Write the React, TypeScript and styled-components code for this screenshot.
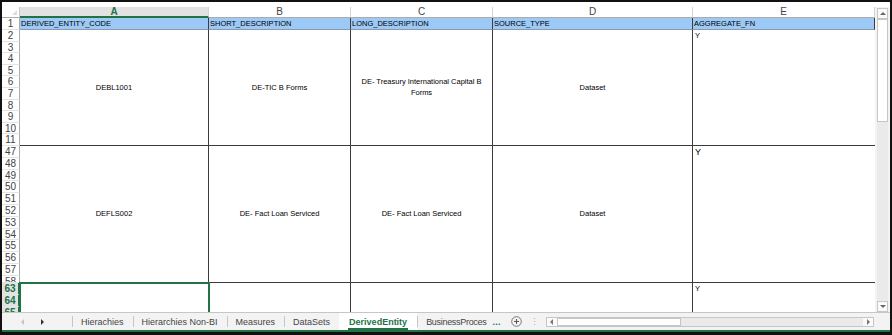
import React from 'react';
import styled, { createGlobalStyle } from 'styled-components';

const GREEN = '#217346';
const LINE = '#3c3c3c';

const GlobalStyle = createGlobalStyle`
  html, body { margin: 0; padding: 0; background: #111; }
  body { font-family: 'Liberation Sans', Arial, sans-serif; }
`;

const Frame = styled.div`
  width: 892px;
  height: 335px;
  box-sizing: border-box;
  border: 2px solid #111;
  border-bottom-width: 3px;
  background: #f3f3f3;
  display: flex;
  flex-direction: column;
  overflow: hidden;
`;

const TopStrip = styled.div`
  height: 5px;
  background: #fff;
  flex: none;
`;

const SheetArea = styled.div`
  height: 305px;
  display: flex;
  flex: none;
  background: #fff;
`;

const Grid = styled.div`
  display: grid;
  grid-template-columns: 18px 189px 142px 142px 200px 182px;
  grid-template-rows: 11px 12px repeat(10, 11.6px) repeat(11, 11.8px) 7px 12px 12px 12px;
  width: 873px;
  height: 305px;
  overflow: hidden;
  background: #fff;
`;

const Corner = styled.div`
  background: #fff;
  border-right: 1px solid #c8c8c8;
  border-bottom: 1px solid #ababab;
  box-sizing: border-box;
  position: relative;
  &::after {
    content: '';
    position: absolute;
    right: 2px;
    bottom: 2px;
    border-left: 5px solid transparent;
    border-bottom: 5px solid #dcdcdc;
  }
`;

const ColHead = styled.div<{ $active?: boolean }>`
  box-sizing: border-box;
  background: ${p => (p.$active ? '#e2e2e2' : '#fff')};
  color: ${p => (p.$active ? GREEN : '#444')};
  font-weight: ${p => (p.$active ? 700 : 400)};
  border-right: 1px solid #d4d4d4;
  border-bottom: ${p => (p.$active ? `2px solid ${GREEN}` : '1px solid #ababab')};
  font-size: 10px;
  line-height: 10px;
  text-align: center;
`;

const RowHead = styled.div<{ $active?: boolean; $row: number }>`
  grid-column: 1;
  grid-row: ${p => p.$row};
  box-sizing: border-box;
  background: ${p => (p.$active ? '#e2e2e2' : '#fff')};
  color: ${p => (p.$active ? GREEN : '#444')};
  font-weight: ${p => (p.$active ? 700 : 400)};
  border-right: ${p => (p.$active ? `2px solid ${GREEN}` : '1px solid #ababab')};
  border-bottom: 1px solid #e4e4e4;
  font-size: 10px;
  line-height: 11.8px;
  text-align: center;
  overflow: hidden;
`;

const HeaderCell = styled.div`
  grid-row: 2;
  box-sizing: border-box;
  background: #9dc9f6;
  border-right: 1px solid ${LINE};
  border-bottom: 1px solid #8a9aab;
  font-size: 7.5px;
  line-height: 11px;
  padding-left: 1px;
  color: #000;
  white-space: nowrap;
  overflow: hidden;
`;

const Cell = styled.div<{ $row: string; $col: number; $top?: boolean; $big?: boolean; $open?: boolean }>`
  grid-row: ${p => p.$row};
  grid-column: ${p => p.$col};
  box-sizing: border-box;
  border-right: ${p => (p.$open ? 'none' : `1px solid ${LINE}`)};
  border-bottom: 1px solid ${LINE};
  display: flex;
  flex-direction: column;
  align-items: ${p => (p.$top ? 'flex-start' : 'center')};
  justify-content: ${p => (p.$top ? 'flex-start' : 'center')};
  text-align: center;
  padding-left: ${p => (p.$top ? '2px' : '0')};
  font-size: ${p => (p.$big ? '9px' : '7.5px')};
  line-height: ${p => (p.$big ? '12px' : '11.6px')};
  color: #000;
  white-space: nowrap;
`;

const Selected = styled(Cell)`
  outline: 2px solid ${GREEN};
  outline-offset: -1px;
  z-index: 1;
`;

const VScrollWrap = styled.div`
  width: 15px;
  padding: 1px 2px 0 2px;
  box-sizing: border-box;
  background: #f3f3f3;
`;

const VScroll = styled.div`
  height: 100%;
  width: 11px;
  display: flex;
  flex-direction: column;
  background: #eaeaea;
`;

const ScrollBtn = styled.div`
  width: 11px;
  height: 11px;
  flex: none;
  box-sizing: border-box;
  border: 1px solid #c6c6c6;
  background: #fafafa;
  display: flex;
  align-items: center;
  justify-content: center;
`;

const VThumb = styled.div`
  height: 103px;
  flex: none;
  box-sizing: border-box;
  border: 1px solid #c6c6c6;
  background: #fff;
`;

const Spacer = styled.div`
  flex: 1;
`;

const Arrow = styled.span<{ $dir: 'up' | 'down' | 'left' | 'right'; $color?: string }>`
  width: 0;
  height: 0;
  ${p => {
    const c = p.$color || '#666';
    switch (p.$dir) {
      case 'up': return `border-left: 3px solid transparent; border-right: 3px solid transparent; border-bottom: 3px solid ${c};`;
      case 'down': return `border-left: 3px solid transparent; border-right: 3px solid transparent; border-top: 3px solid ${c};`;
      case 'left': return `border-top: 3px solid transparent; border-bottom: 3px solid transparent; border-right: 3px solid ${c};`;
      default: return `border-top: 3px solid transparent; border-bottom: 3px solid transparent; border-left: 3px solid ${c};`;
    }
  }}
`;

const TabBar = styled.div`
  height: 18px;
  flex: none;
  box-sizing: border-box;
  border-top: 1px solid #c6c6c6;
  background: #f3f3f3;
  display: flex;
  align-items: stretch;
  font-size: 9px;
  color: #444;
`;

const Nav = styled.div`
  width: 70px;
  display: flex;
  align-items: center;
  gap: 17px;
  padding-left: 19px;
  box-sizing: border-box;
`;

const Tab = styled.div<{ $active?: boolean; $tight?: boolean }>`
  display: flex;
  align-items: center;
  padding: ${p => (p.$tight ? '0 0 0 9px' : '0 9px')};
  position: relative;
  background: ${p => (p.$active ? '#fff' : 'transparent')};
  color: ${p => (p.$active ? GREEN : '#444')};
  font-weight: ${p => (p.$active ? 700 : 400)};
  letter-spacing: ${p => (p.$tight ? '-0.3px' : 'normal')};
  white-space: nowrap;
  &::before {
    content: '';
    position: absolute;
    left: 0;
    top: 3px;
    bottom: 3px;
    border-left: 1px solid ${p => (p.$active ? 'transparent' : '#c6c6c6')};
  }
  ${p => p.$active && `
    & > span { border-bottom: 2px solid ${GREEN}; line-height: 12px; padding: 0 1px; margin-top: 2px; }
  `}
`;

const More = styled.div`
  display: flex;
  align-items: center;
  color: ${GREEN};
  font-weight: 700;
  padding: 0 0 0 6px;
  letter-spacing: 0.3px;
`;

const AddBtn = styled.div`
  display: flex;
  align-items: center;
  padding: 0 0 0 10px;
`;

const Dots = styled.div`
  display: flex;
  align-items: center;
  padding: 0 7px 0 8px;
  color: #aaa;
  font-size: 9px;
`;

const HScroll = styled.div`
  flex: 1;
  margin: 4px 16px 3px 0;
  display: flex;
  background: #eaeaea;
  border: 1px solid #c6c6c6;
`;

const HBtn = styled.div`
  width: 10px;
  flex: none;
  background: #fafafa;
  display: flex;
  align-items: center;
  justify-content: center;
`;

const HThumb = styled.div`
  width: 124px;
  box-sizing: border-box;
  border: 1px solid #c6c6c6;
  background: #fff;
`;

const StatusLine = styled.div`
  height: 2px;
  flex: none;
  background: ${GREEN};
`;

const rowLabels: { n: number; row: number; active?: boolean }[] = [
  ...Array.from({ length: 11 }, (_, i) => ({ n: i + 1, row: i + 2 })),
  ...Array.from({ length: 12 }, (_, i) => ({ n: 47 + i, row: 13 + i })),
  { n: 63, row: 25, active: true },
  { n: 64, row: 26, active: true },
  { n: 65, row: 27, active: true },
];

const headers = ['DERIVED_ENTITY_CODE', 'SHORT_DESCRIPTION', 'LONG_DESCRIPTION', 'SOURCE_TYPE', 'AGGREGATE_FN'];

export default function App() {
  return (
    <>
      <GlobalStyle />
      <Frame>
        <TopStrip />
        <SheetArea>
          <Grid>
            <Corner />
            {['A', 'B', 'C', 'D', 'E'].map(l => (
              <ColHead key={l} $active={l === 'A'}>{l}</ColHead>
            ))}
            {rowLabels.map(r => (
              <RowHead key={r.n} $row={r.row} $active={r.active}>{r.n}</RowHead>
            ))}
            {headers.map(h => (
              <HeaderCell key={h}>{h}</HeaderCell>
            ))}

            <Cell $row="3 / span 10" $col={2}>DEBL1001</Cell>
            <Cell $row="3 / span 10" $col={3}>DE-TIC B Forms</Cell>
            <Cell $row="3 / span 10" $col={4}>
              <span>DE- Treasury International Capital B</span>
              <span>Forms</span>
            </Cell>
            <Cell $row="3 / span 10" $col={5}>Dataset</Cell>
            <Cell $row="3 / span 10" $col={6} $top $open>Y</Cell>

            <Cell $row="13 / span 12" $col={2}>DEFLS002</Cell>
            <Cell $row="13 / span 12" $col={3}>DE- Fact Loan Serviced</Cell>
            <Cell $row="13 / span 12" $col={4}>DE- Fact Loan Serviced</Cell>
            <Cell $row="13 / span 12" $col={5}>Dataset</Cell>
            <Cell $row="13 / span 12" $col={6} $top $big $open>Y</Cell>

            <Selected $row="25 / span 3" $col={2} />
            <Cell $row="25 / span 3" $col={3} />
            <Cell $row="25 / span 3" $col={4} />
            <Cell $row="25 / span 3" $col={5} />
            <Cell $row="25 / span 3" $col={6} $top $open>Y</Cell>
          </Grid>
          <VScrollWrap>
            <VScroll>
              <ScrollBtn><Arrow $dir="up" /></ScrollBtn>
              <VThumb />
              <Spacer />
              <ScrollBtn><Arrow $dir="down" /></ScrollBtn>
            </VScroll>
          </VScrollWrap>
        </SheetArea>
        <TabBar>
          <Nav>
            <Arrow $dir="left" $color="#c4c4c4" />
            <Arrow $dir="right" $color="#333" />
          </Nav>
          <Tab><span>Hierachies</span></Tab>
          <Tab><span>Hierarchies Non-BI</span></Tab>
          <Tab><span>Measures</span></Tab>
          <Tab><span>DataSets</span></Tab>
          <Tab $active><span>DerivedEntity</span></Tab>
          <Tab $tight><span>BusinessProces</span></Tab>
          <More>...</More>
          <AddBtn>
            <svg width="11" height="11" viewBox="0 0 11 11">
              <circle cx="5.5" cy="5.5" r="4.8" fill="none" stroke="#777" strokeWidth="1" />
              <path d="M5.5 3v5M3 5.5h5" stroke="#555" strokeWidth="1" />
            </svg>
          </AddBtn>
          <Dots>⋮</Dots>
          <HScroll>
            <HBtn><Arrow $dir="left" $color="#777" /></HBtn>
            <HThumb />
            <Spacer />
            <HBtn><Arrow $dir="right" $color="#777" /></HBtn>
          </HScroll>
        </TabBar>
        <StatusLine />
      </Frame>
    </>
  );
}
